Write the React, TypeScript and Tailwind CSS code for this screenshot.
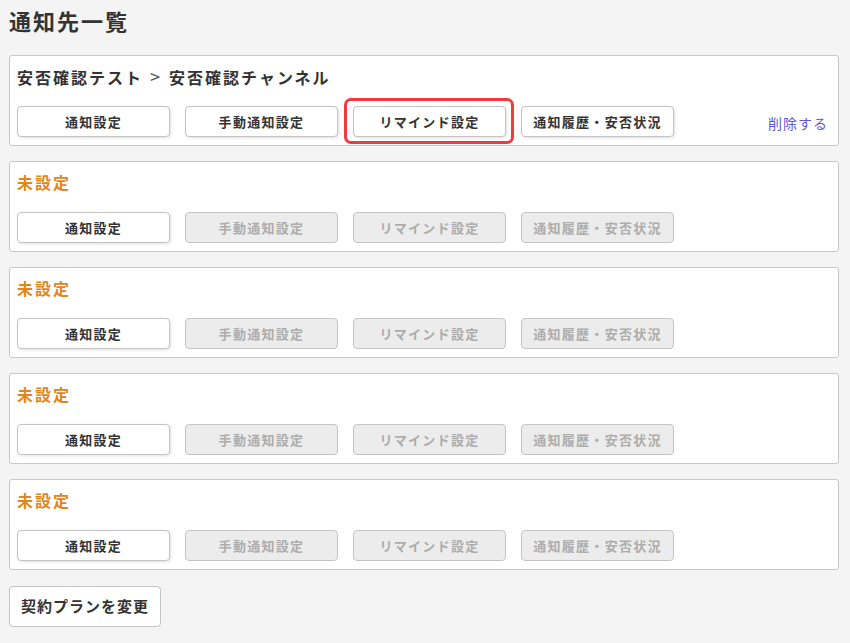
import React from "react";

type Channel = {
  group: string | null;
  name: string | null;
  active: boolean;
};

const channels: Channel[] = [
  { group: "安否確認テスト", name: "安否確認チャンネル", active: true },
  { group: null, name: null, active: false },
  { group: null, name: null, active: false },
  { group: null, name: null, active: false },
  { group: null, name: null, active: false },
];

const ActionButton = (props: { label: string; disabled?: boolean; highlight?: boolean }) => {
  const { label, disabled, highlight } = props;
  return (
    <div className="relative">
      <button
        className={
          disabled
            ? "w-[153px] h-[31px] rounded-[4px] border border-[#c4c4c4] bg-[#ececec] text-[13px] font-bold tracking-[1.3px] text-[#adadad]"
            : "w-[153px] h-[31px] rounded-[4px] border border-[#c4c4c4] bg-white text-[13px] font-bold tracking-[1.3px] text-[#333] shadow-[1px_1px_3px_rgba(0,0,0,0.12)]"
        }
      >
        {label}
      </button>
      {highlight && (
        <span className="pointer-events-none absolute -left-[9px] -right-[8px] -top-[8px] -bottom-[7px] rounded-[7px] border-[3px] border-[#f23a3a]" />
      )}
    </div>
  );
};

const ChannelCard = (props: { channel: Channel }) => {
  const { channel } = props;
  return (
    <div className="bg-white border border-[#c8c8c8] rounded-[3px] pl-[7px] pr-[10px] pt-[8px] pb-[8px]">
      {channel.name ? (
        <p className="h-[24px] leading-[24px] text-[16px] font-bold tracking-[2px] text-[#333]">
          {channel.group}
          <span className="font-normal text-[18px] text-[#555] px-[1px]"> &gt; </span>
          {channel.name}
        </p>
      ) : (
        <p className="h-[24px] leading-[24px] text-[16px] font-bold tracking-[2px] text-[#e0861b]">
          未設定
        </p>
      )}
      <div className="mt-[18px] flex items-end justify-between">
        <div className="flex gap-[15px]">
          <ActionButton label="通知設定" />
          <ActionButton label="手動通知設定" disabled={!channel.active} />
          <ActionButton label="リマインド設定" disabled={!channel.active} highlight={channel.active} />
          <ActionButton label="通知履歴・安否状況" disabled={!channel.active} />
        </div>
        {channel.active && (
          <a className="text-[14px] leading-[20px] tracking-[1px] text-[#5b5bd9] cursor-pointer mb-[4px]">
            削除する
          </a>
        )}
      </div>
    </div>
  );
};

const App = () => {
  return (
    <div
      className="min-h-[643px] bg-[#f4f4f4] pl-[9px] pr-[11px] pt-[5px] pb-[16px]"
      style={{ fontFamily: '"Noto Sans CJK JP", "Noto Sans", sans-serif' }}
    >
      <h1 className="h-[30px] leading-[30px] text-[22px] font-bold tracking-[2px] text-[#333]">
        通知先一覧
      </h1>
      <div className="mt-[20px] flex flex-col gap-[15px]">
        {channels.map((c, i) => (
          <ChannelCard key={i} channel={c} />
        ))}
      </div>
      <button className="mt-[16px] h-[41px] w-[152px] rounded-[4px] border border-[#c4c4c4] bg-white text-[15px] font-bold tracking-[1px] text-[#333]">
        契約プランを変更
      </button>
    </div>
  );
};

export default App;
